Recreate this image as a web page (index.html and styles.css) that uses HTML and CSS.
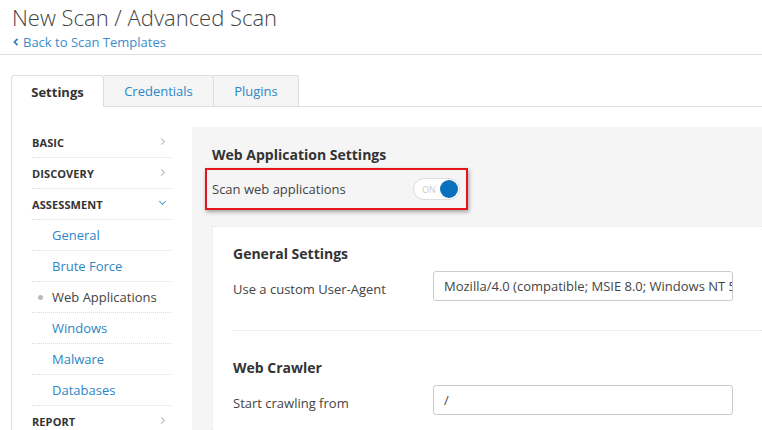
FILE: index.html
```html
<!DOCTYPE html>
<html>
<head>
<meta charset="utf-8">
<link rel="stylesheet" href="styles.css">
</head>
<body>
<div class="page">
  <header class="page-header">
    <h1 class="title">New Scan / Advanced Scan</h1>
    <a class="back" href="#"><svg class="back-icon" width="6" height="8" viewBox="0 0 6 8"><path d="M4.5 0.8 L1.5 4 L4.5 7.2" fill="none" stroke="currentColor" stroke-width="1.8"/></svg>Back to Scan Templates</a>
  </header>

  <nav class="tabs">
    <div class="tab active">Settings</div>
    <div class="tab">Credentials</div>
    <div class="tab">Plugins</div>
  </nav>

  <div class="panel">
    <aside class="sidebar">
      <div class="side-row section">BASIC<span class="chev right"></span></div>
      <div class="side-row section">DISCOVERY<span class="chev right"></span></div>
      <div class="side-row section">ASSESSMENT<span class="chev down"></span></div>
      <div class="side-row sub">General</div>
      <div class="side-row sub">Brute Force</div>
      <div class="side-row sub current"><span class="dot"></span>Web Applications</div>
      <div class="side-row sub">Windows</div>
      <div class="side-row sub">Malware</div>
      <div class="side-row sub">Databases</div>
      <div class="side-row section">REPORT<span class="chev right"></span></div>
    </aside>

    <main class="content">
      <h2 class="heading">Web Application Settings</h2>
      <div class="highlight">
        <span class="label">Scan web applications</span>
        <span class="toggle"><span class="toggle-text">ON</span><span class="knob"></span></span>
      </div>

      <section class="card">
        <h3 class="card-heading">General Settings</h3>
        <div class="field">
          <span class="field-label">Use a custom User-Agent</span>
          <div class="input">Mozilla/4.0 (compatible; MSIE 8.0; Windows NT 5</div>
        </div>
        <div class="sep"></div>
        <h3 class="card-heading second">Web Crawler</h3>
        <div class="field">
          <span class="field-label">Start crawling from</span>
          <div class="input">/</div>
        </div>
      </section>
    </main>
  </div>
</div>
</body>
</html>
```

FILE: styles.css
```css
html, body {
  margin: 0;
  padding: 0;
  background: #fff;
  overflow: hidden;
}
body {
  font-family: "Open Sans", "Liberation Sans", sans-serif;
  color: #444;
  width: 762px;
  height: 430px;
}
.page {
  width: 762px;
  height: 430px;
  overflow: hidden;
}
.page-header {
  padding: 3px 0 0 12px;
  border-bottom: 1px solid #ddd;
  box-sizing: border-box;
  height: 55px;
}
.title {
  margin: 0;
  font-size: 22px;
  font-weight: 300;
  color: #444;
  line-height: 28px;
}
.back {
  display: flex;
  align-items: center;
  gap: 4px;
  margin-top: 2px;
  font-size: 13px;
  line-height: 18px;
  color: #3b8ccb;
  text-decoration: none;
}
.back-icon {
  margin-left: 1px;
  color: #2f7fc0;
}
.tabs {
  display: flex;
  margin: 20px 0 0 11px;
  border-bottom: 1px solid #ddd;
  box-sizing: border-box;
  height: 32px;
}
.tab {
  height: 31px;
  box-sizing: border-box;
  display: flex;
  align-items: center;
  justify-content: center;
  font-size: 13px;
  color: #2d86c6;
  background: #f5f5f5;
  border: 1px solid #ddd;
  border-left: none;
  border-bottom: none;
  border-radius: 0 3px 0 0;
}
.tab:nth-child(2) { width: 110px; }
.tab:nth-child(3) { width: 85px; }
.tab.active {
  width: 93px;
  background: #fff;
  color: #333;
  font-weight: 700;
  border-left: 1px solid #ddd;
  border-radius: 3px 3px 0 0;
  height: 32px;
}
.panel {
  display: flex;
  margin-left: 11px;
  border-left: 1px solid #ddd;
  padding-top: 20px;
  height: 323px;
  overflow: hidden;
}
.sidebar {
  width: 140px;
  padding: 0 20px;
  flex: none;
}
.side-row {
  height: 31px;
  box-sizing: border-box;
  border-bottom: 1px dotted #ddd;
  display: flex;
  align-items: center;
  position: relative;
}
.side-row.section {
  font-size: 11px;
  font-weight: 700;
  color: #333;
  letter-spacing: 0.1px;
}
.side-row.sub {
  padding-left: 20px;
  font-size: 13px;
  color: #2d86c6;
}
.side-row.current {
  color: #444;
}
.dot {
  position: absolute;
  left: 6px;
  top: 13px;
  width: 5px;
  height: 5px;
  border-radius: 50%;
  background: #bbb;
}
.chev {
  position: absolute;
  right: 8px;
  top: 12px;
  width: 4px;
  height: 4px;
  border-right: 1px solid #bbb;
  border-bottom: 1px solid #bbb;
}
.chev.right {
  transform: rotate(-45deg);
}
.chev.down {
  top: 10px;
  right: 7px;
  border-color: #4aa3c9;
  transform: rotate(45deg);
}
.content {
  flex: 1;
  min-width: 0;
  background: #f5f5f5;
  padding: 18px 0 0 20px;
}
.heading {
  margin: 0;
  font-size: 14px;
  font-weight: 700;
  color: #333;
  line-height: 20px;
}
.highlight {
  margin: 3px 0 0 -7px;
  width: 263px;
  height: 42px;
  box-sizing: border-box;
  border: 2px solid #e8141b;
  box-shadow: 1px 2px 4px rgba(0,0,0,0.35);
  display: flex;
  align-items: center;
  justify-content: space-between;
  padding: 0 6px 0 5px;
}
.label {
  font-size: 13px;
  color: #444;
}
.toggle {
  width: 47px;
  height: 22px;
  box-sizing: border-box;
  border: 1px solid #ddd;
  border-radius: 11px;
  background: #fff;
  display: flex;
  align-items: center;
  justify-content: space-between;
  padding: 0 1px 0 8px;
}
.toggle-text {
  font-size: 9px;
  color: #ccc;
}
.knob {
  width: 18px;
  height: 18px;
  border-radius: 50%;
  background: #0a70be;
}
.card {
  margin-top: 16px;
  background: #fff;
  border: 1px dotted #e2e2e2;
  border-right: none;
  padding: 0 0 20px 20px;
}
.card-heading {
  margin: 0;
  padding-top: 17px;
  font-size: 14px;
  font-weight: 700;
  color: #333;
  line-height: 20px;
}
.card-heading.second {
  padding-top: 27px;
}
.field {
  display: flex;
  align-items: center;
  margin-top: 7px;
}
.field-label {
  width: 200px;
  flex: none;
  padding-top: 6px;
  font-size: 13px;
  color: #444;
}
.input {
  width: 300px;
  flex: none;
  height: 30px;
  box-sizing: border-box;
  border: 1px solid #ccc;
  border-radius: 3px;
  padding: 0 10px;
  font-size: 13px;
  line-height: 28px;
  color: #444;
  white-space: nowrap;
  overflow: hidden;
}
.sep {
  margin-top: 29px;
  border-top: 1px dotted #ddd;
}
```
